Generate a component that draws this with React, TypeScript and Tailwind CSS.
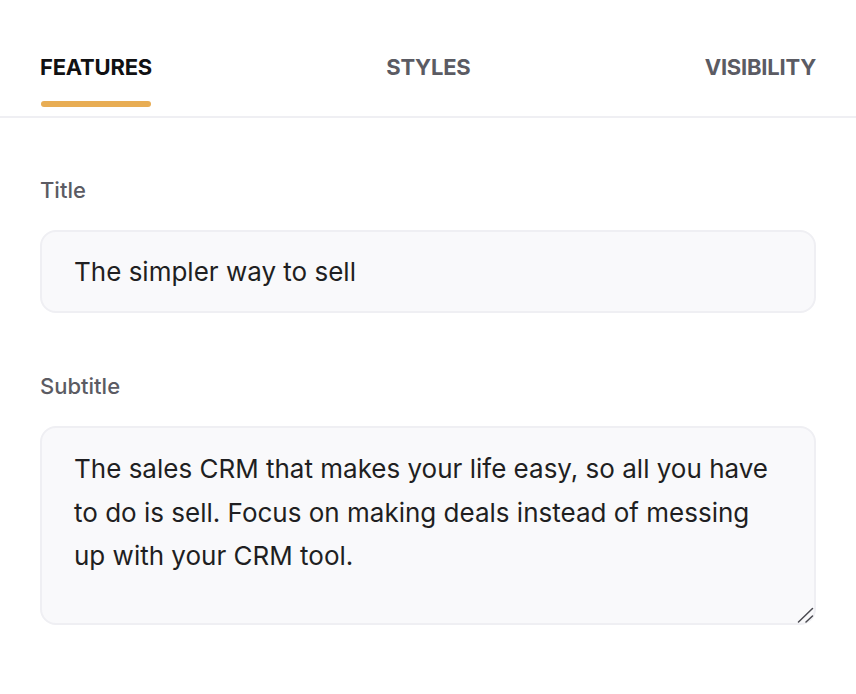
import { useState } from "react";

const tabs = ["FEATURES", "STYLES", "VISIBILITY"];

export default function App() {
  const [active, setActive] = useState("FEATURES");
  const [title, setTitle] = useState("The simpler way to sell");
  const [subtitle, setSubtitle] = useState(
    "The sales CRM that makes your life easy, so all you have to do is sell. Focus on making deals instead of messing up with your CRM tool."
  );

  return (
    <div
      className="w-[856px] h-[694px] bg-white"
      style={{ fontFamily: "Inter, 'Noto Sans', sans-serif" }}
    >
      {/* Tabs */}
      <div className="flex justify-between px-[40px] pt-[51px] border-b-2 border-[#efeff3]">
        {tabs.map((tab) => (
          <button
            key={tab}
            type="button"
            onClick={() => setActive(tab)}
            className="flex flex-col items-stretch"
          >
            <span
              className={`text-[22px] leading-[32px] font-bold tracking-[-0.01em] ${
                active === tab ? "text-[#111113]" : "text-[#5b5b63]"
              }`}
            >
              {tab}
            </span>
            <span
              className={`mt-[18px] mb-[9px] h-[6px] rounded-full mx-[1px] ${
                active === tab ? "bg-[#e8ad54]" : "bg-transparent"
              }`}
            />
          </button>
        ))}
      </div>

      {/* Form */}
      <div className="px-[40px] pt-[56px] flex flex-col">
        <label
          htmlFor="title"
          className="text-[22px] leading-[32px] font-medium text-[#5b5b63]"
        >
          Title
        </label>
        <input
          id="title"
          type="text"
          value={title}
          onChange={(e) => setTitle(e.target.value)}
          className="mt-[24px] h-[83px] w-full px-[32px] bg-[#f9f9fb] border-2 border-[#efeff3] rounded-[16px] text-[26px] text-[#1f1f22] focus:outline-none"
        />

        <label
          htmlFor="subtitle"
          className="mt-[57px] text-[22px] leading-[32px] font-medium text-[#5b5b63]"
        >
          Subtitle
        </label>
        <div className="relative mt-[24px]">
          <textarea
            id="subtitle"
            value={subtitle}
            onChange={(e) => setSubtitle(e.target.value)}
            className="block h-[199px] w-full resize-none px-[32px] pt-[19px] bg-[#f9f9fb] border-2 border-[#efeff3] rounded-[16px] text-[26px] leading-[43.5px] text-[#1f1f22] focus:outline-none"
          />
          {/* resize grip */}
          <svg
            className="pointer-events-none absolute right-[2px] bottom-[2px]"
            width="18"
            height="18"
            viewBox="0 0 18 18"
          >
            <path
              d="M2.5 17 L16.5 3.5 M10 17 L16.5 11"
              stroke="#4a4a50"
              strokeWidth="1.5"
              strokeLinecap="round"
            />
          </svg>
        </div>
      </div>
    </div>
  );
}
